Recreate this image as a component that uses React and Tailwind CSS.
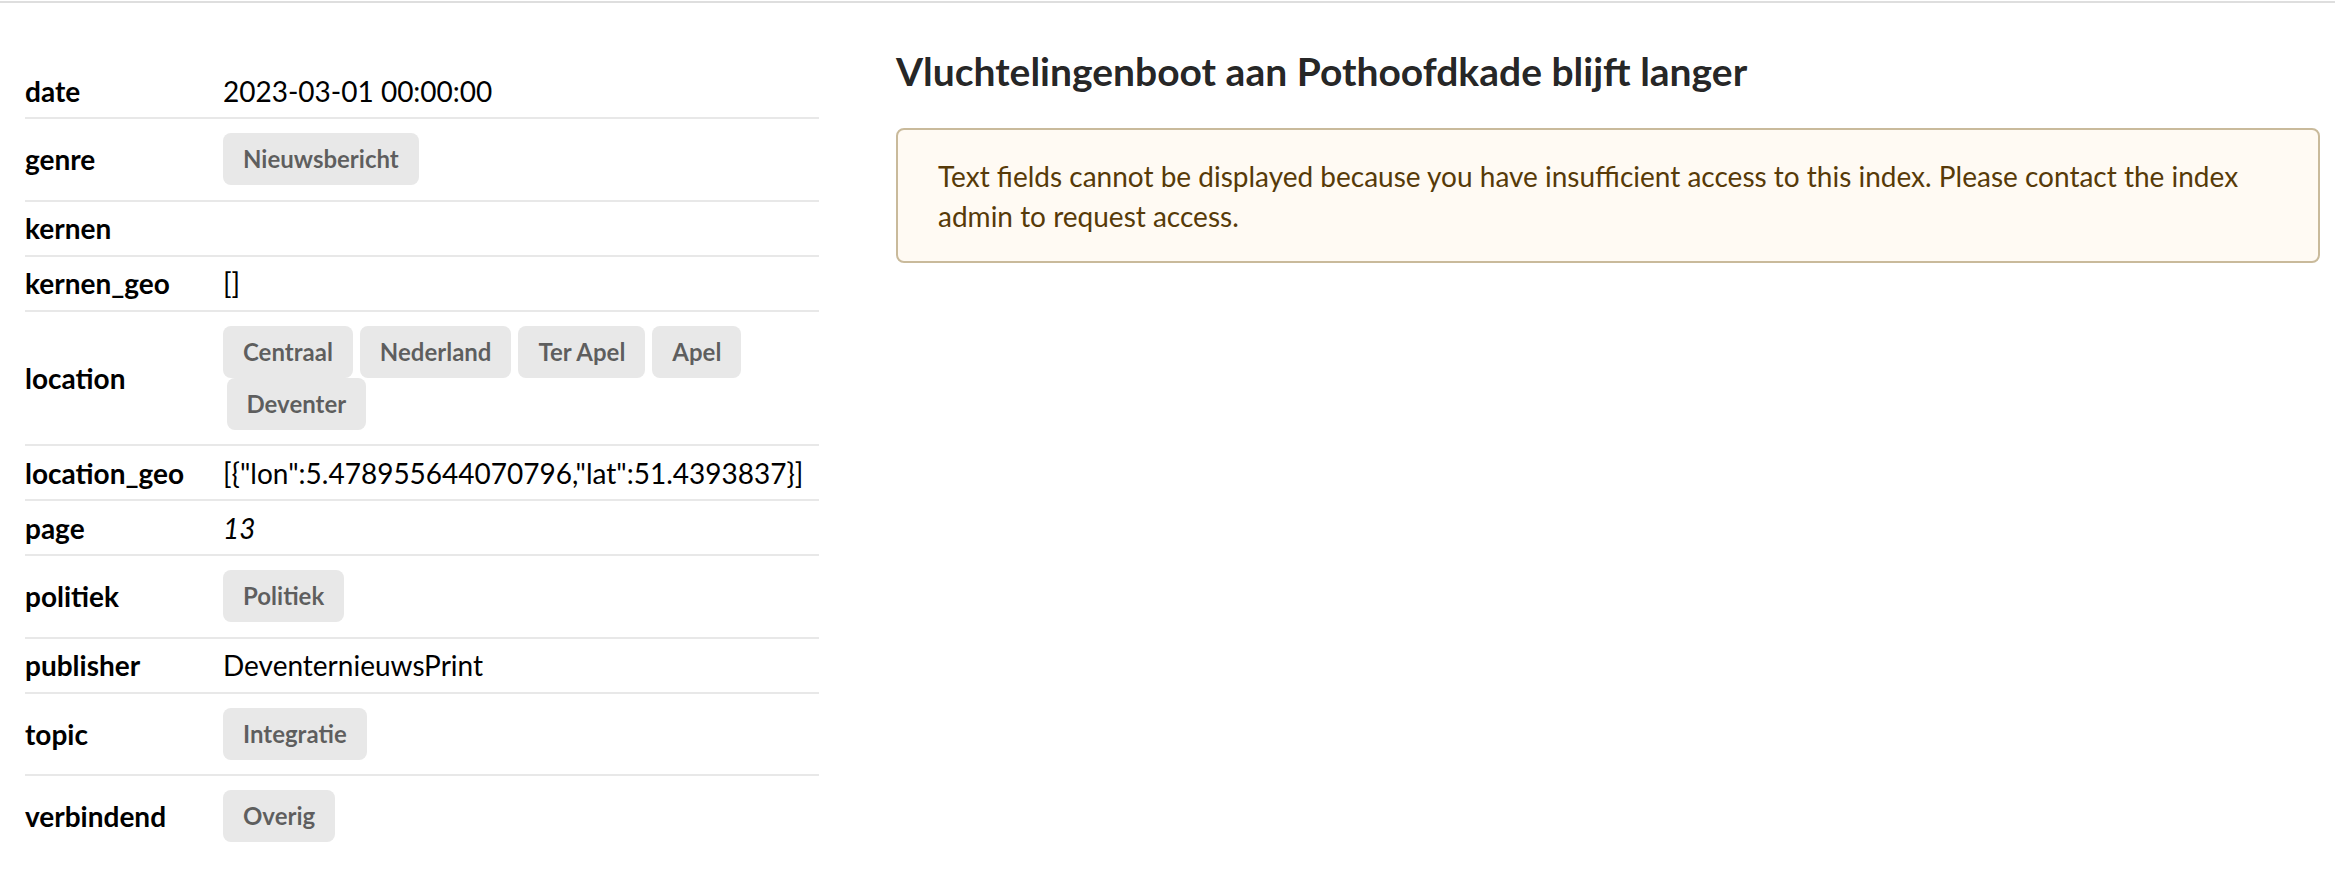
import React from 'react'

const fields = [
  { key: 'date', text: '2023-03-01 00:00:00' },
  { key: 'genre', tags: ['Nieuwsbericht'] },
  { key: 'kernen', text: '' },
  { key: 'kernen_geo', text: '[]' },
  { key: 'location', tags: ['Centraal', 'Nederland', 'Ter Apel', 'Apel', 'Deventer'] },
  { key: 'location_geo', text: '[{"lon":5.478955644070796,"lat":51.4393837}]' },
  { key: 'page', text: '13', italic: true },
  { key: 'politiek', tags: ['Politiek'] },
  { key: 'publisher', text: 'DeventernieuwsPrint' },
  { key: 'topic', tags: ['Integratie'] },
  { key: 'verbindend', tags: ['Overig'] },
]

function Tag({ children }) {
  return (
    <span className="inline-block mx-[3.5px] first:ml-0 px-[20px] py-[14px] rounded-[8px] bg-[#e8e8e8] text-[rgba(0,0,0,0.6)] text-[24px] font-bold leading-none">
      {children}
    </span>
  )
}

function FieldRow({ field, last }) {
  return (
    <div className={`flex items-center ${last ? '' : 'border-b-2 border-[#e8e8e8]'}`}>
      <div className="w-[198px] shrink-0 py-[6.5px] font-bold">{field.key}</div>
      {field.tags ? (
        <div className="flex-1 flex flex-wrap py-[14.25px]">
          {field.tags.map((t) => (
            <Tag key={t}>{t}</Tag>
          ))}
        </div>
      ) : (
        <div className={`flex-1 py-[6.5px] min-h-[53px] ${field.italic ? 'italic' : ''}`}>{field.text}</div>
      )}
    </div>
  )
}

export default function App() {
  return (
    <div className="min-h-screen bg-white pt-[1px] font-[Lato,sans-serif] text-[28px] leading-[40px] text-black">
      <div className="border-t-2 border-[#dedede]" />
      <div className="flex pl-[25px] pr-[15px]">
        <div className="w-[794px] shrink-0 pt-[61px]">
          {fields.map((f, i) => (
            <FieldRow key={f.key} field={f} last={i === fields.length - 1} />
          ))}
        </div>
        <div className="flex-1 ml-[77px] pt-[43px]">
          <h3 className="text-[39px] leading-[50px] font-bold text-[rgba(0,0,0,0.87)]">
            Vluchtelingenboot aan Pothoofdkade blijft langer
          </h3>
          <div className="mt-[32px] border-2 border-[#c9ba9b] rounded-[8px] bg-[#fffaf3] text-[#573a08] px-[40px] py-[25.5px]">
            Text fields cannot be displayed because you have insufficient access to this index. Please contact the index admin to request access.
          </div>
        </div>
      </div>
    </div>
  )
}
